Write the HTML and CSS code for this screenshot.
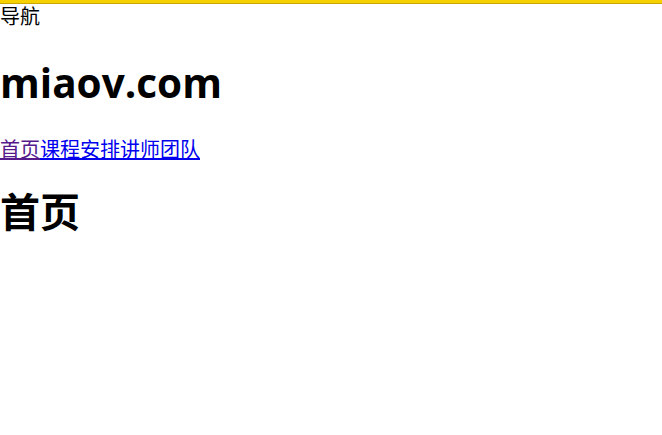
FILE: index.html
```html
<!DOCTYPE html>
<html lang="zh">
<head>
<meta charset="utf-8">
<title>miaov.com</title>
<link rel="stylesheet" href="styles.css">
</head>
<body>
<div class="nav">
  <div class="nav-title">导航</div>
  <h1 class="site">miaov.com</h1>
  <div class="links"><a class="visited" href="#home">首页</a><a href="#course">课程安排</a><a href="#team">讲师团队</a></div>
</div>
<h1 class="page">首页</h1>
</body>
</html>
```
FILE: styles.css
```css
html, body {
  margin: 0;
  padding: 0;
  background: #fff;
}
body {
  font-family: "Open Sans", "Noto Sans CJK SC", sans-serif;
  font-size: 20px;
  line-height: 1.3;
  color: #000;
}
.nav {
  border-top: 3px solid #f7d000;
  box-shadow: inset 0 1px 0 #c8a600;
}
.nav-title {
  padding-top: 1px;
}
h1 {
  font-size: 40px;
  font-weight: bold;
  margin: 27px 0;
}
.site {
  font-size: 40.5px;
}
.page {
  margin-top: 23px;
}
.links a {
  color: #0000ee;
  text-decoration: underline;
}
.links a.visited {
  color: #551a8b;
}
```
